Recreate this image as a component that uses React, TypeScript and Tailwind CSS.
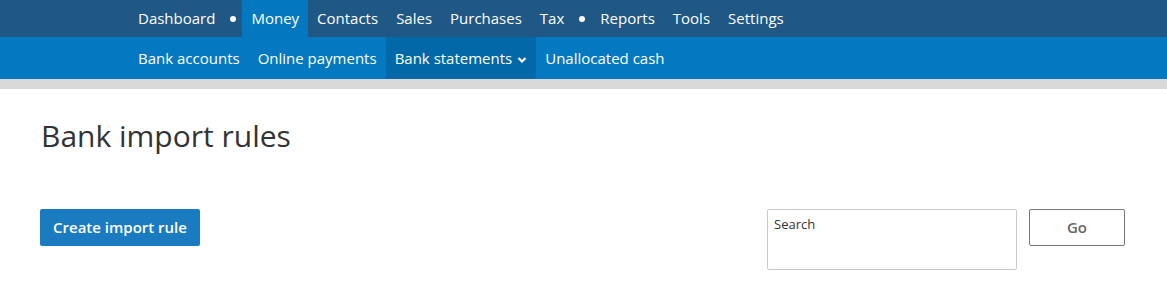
const topItems = ["Dashboard", "•", "Money", "Contacts", "Sales", "Purchases", "Tax", "•", "Reports", "Tools", "Settings"];
const subItems = ["Bank accounts", "Online payments", "Bank statements", "Unallocated cash"];

const font = { fontFamily: '"Open Sans", "Noto Sans", sans-serif' };

export default function App() {
    return (
        <div className="w-[1167px] h-[297px] bg-white overflow-hidden text-[#333]" style={font}>
            <div className="h-[37px] bg-[#1f5785] flex pl-[129px] text-white text-[15px]">
                {topItems.map((item, i) =>
                    item === "•" ? (
                        <div key={i} className="w-[18px] flex items-center justify-center">
                            <span className="w-[6px] h-[6px] rounded-full bg-white" />
                        </div>
                    ) : (
                        <div
                            key={i}
                            className={
                                "px-[9px] flex items-center " +
                                (item === "Money" ? "bg-[#0378c0]" : "")
                            }
                        >
                            {item}
                        </div>
                    )
                )}
            </div>
            <div className="h-[42px] bg-[#0479c1] flex pl-[129px] text-white text-[15px]">
                {subItems.map((item) => (
                    <div
                        key={item}
                        className={
                            "px-[9px] flex items-center gap-[5px] " +
                            (item === "Bank statements" ? "bg-[#0268a8]" : "")
                        }
                    >
                        {item}
                        {item === "Bank statements" && (
                            <svg width="10" height="8" viewBox="0 0 10 8" className="mt-[3px]">
                                <path d="M1.5 2 L5 5.5 L8.5 2" stroke="white" strokeWidth="2.2" fill="none" />
                            </svg>
                        )}
                    </div>
                ))}
            </div>
            <div className="h-[10px] bg-[#d9d9d9]" />
            <div className="px-[40px] pr-[42px]">
                <h1 className="mt-[29px] text-[30px] leading-[36px] font-normal text-[#333] pl-[1px]">
                    Bank import rules
                </h1>
                <div className="mt-[55px] flex items-start">
                    <button className="h-[37px] w-[160px] bg-[#1b7bc1] rounded-[2px] text-white text-[15px] font-semibold">
                        Create import rule
                    </button>
                    <div className="ml-auto flex items-start gap-[12px]">
                        <div className="w-[250px] h-[61px] border border-[#c8c8c8] rounded-[2px] px-[6px] pt-[5px] text-[13px] text-[#333]">
                            Search
                        </div>
                        <button className="w-[96px] h-[37px] border border-[#777] rounded-[2px] text-[15px] font-semibold text-[#666]">
                            Go
                        </button>
                    </div>
                </div>
            </div>
        </div>
    );
}
